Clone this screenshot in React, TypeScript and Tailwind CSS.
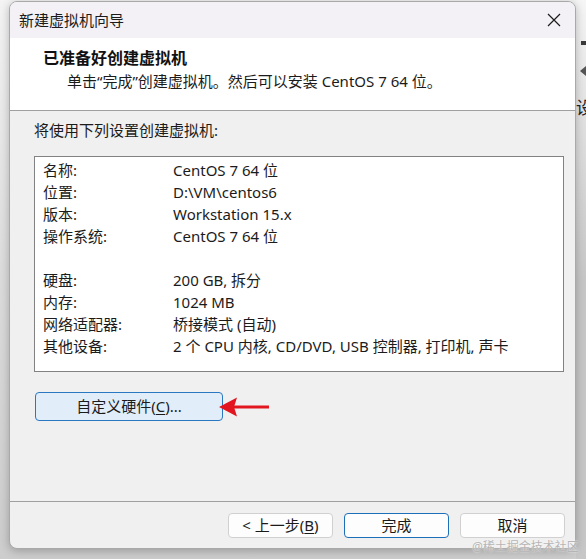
import React from 'react';

const font = { fontFamily: '"Noto Sans", "Noto Sans CJK SC", sans-serif' };

const rows: [string, string][] = [
  ['名称:', 'CentOS 7 64 位'],
  ['位置:', 'D:\\VM\\centos6'],
  ['版本:', 'Workstation 15.x'],
  ['操作系统:', 'CentOS 7 64 位'],
  ['', ''],
  ['硬盘:', '200 GB, 拆分'],
  ['内存:', '1024 MB'],
  ['网络适配器:', '桥接模式 (自动)'],
  ['其他设备:', '2 个 CPU 内核, CD/DVD, USB 控制器, 打印机, 声卡'],
];

function FooterButton({ children, primary }: { children: React.ReactNode; primary?: boolean }) {
  return (
    <button
      className={`w-[105px] h-[25px] rounded-[4px] bg-[#fdfdfd] text-[15px] leading-none text-[#1a1a1a] flex items-center justify-center ${
        primary ? 'border border-[#1e6fba]' : 'border border-[#d0d0d0]'
      }`}
    >
      {children}
    </button>
  );
}

export default function App() {
  return (
    <div
      className="relative w-[586px] h-[559px] overflow-hidden bg-gradient-to-b from-[#f4f4f4] via-[#dcdcdc] to-[#cdcdcd]"
      style={font}
    >
      {/* desktop strip on the right */}
      <div className="absolute right-0 top-0 w-[10px] h-full bg-gradient-to-b from-[#f6f6f6] via-[#c7c7c7] to-[#c7c7c7]" />
      <div className="absolute left-[581px] top-[41px] w-[5px] h-[4px] bg-[#3a3a3a]" />
      <div className="absolute left-[580px] top-[66px] w-0 h-0 border-y-[5px] border-y-transparent border-r-[6px] border-r-[#555]" />
      <div className="absolute left-[576px] top-[99px] text-[17px] leading-none text-[#222]">设</div>

      {/* dialog */}
      <div className="relative ml-[9px] mt-[1px] w-[567px] h-[548px] rounded-[8px] border border-[#a9a9a9] bg-[#f0f0f0] overflow-hidden flex flex-col shadow-[0_2px_10px_rgba(0,0,0,0.25)]">
        {/* title bar */}
        <div className="h-[36px] shrink-0 bg-[#f3f1f6] flex items-center justify-between pl-[9px] pr-[11px]">
          <span className="text-[15px] text-[#1b1b1b] leading-none">新建虚拟机向导</span>
          <svg width="14" height="14" viewBox="0 0 14 14" className="mr-[3px]">
            <path d="M1 1 L13 13 M13 1 L1 13" stroke="#1b1b1b" strokeWidth="1.2" fill="none" />
          </svg>
        </div>

        {/* header */}
        <div className="h-[73px] shrink-0 bg-white border-b border-[#a0a0a0] pl-[33px] pt-[10px]">
          <div className="text-[16px] font-bold text-[#111] leading-[20px]">已准备好创建虚拟机</div>
          <div className="pl-[24px] mt-[3px] text-[15px] text-[#1b1b1b] leading-[20px]">
            单击“完成”创建虚拟机。然后可以安装 CentOS 7 64 位。
          </div>
        </div>

        {/* body */}
        <div className="flex-1 flex flex-col px-[24px] pt-[9px]">
          <div className="text-[15px] text-[#1b1b1b] leading-[20px]">将使用下列设置创建虚拟机:</div>
          <div className="mt-[16px] w-[530px] h-[216px] bg-white border border-[#828282] pt-[2px] pl-[8px]">
            {rows.map(([k, v], i) => (
              <div key={i} className="h-[22px] flex items-center text-[15px] text-[#1b1b1b] leading-none">
                <span className="w-[130px]">{k}</span>
                <span>{v}</span>
              </div>
            ))}
          </div>

          <div className="mt-[20px] flex items-center">
            <button className="ml-[1px] w-[188px] h-[29px] rounded-[4px] border border-[#2a78c2] bg-[#e1eefa] text-[15px] text-[#1b1b1b] leading-none flex items-center justify-center">
              自定义硬件(<span className="underline underline-offset-2">C</span>)...
            </button>
            <svg width="52" height="22" viewBox="0 0 52 22" className="-ml-[4px]">
              <path d="M14 9.5 H50 V12.5 H14 Z" fill="#e2161f" />
              <path d="M0 11 L18 1.5 L15 11 L18 20.5 Z" fill="#e2161f" />
            </svg>
          </div>
        </div>

        {/* footer */}
        <div className="h-[47px] shrink-0 border-t border-[#a0a0a0] flex items-start justify-end gap-[11px] pt-[11px] pr-[10px]">
          <FooterButton>
            &lt; 上一步(<span className="underline underline-offset-2">B</span>)
          </FooterButton>
          <FooterButton primary>完成</FooterButton>
          <FooterButton>取消</FooterButton>
        </div>
      </div>

      {/* watermark */}
      <div className="absolute left-[472px] top-[541px] text-[12px] leading-none text-[#b5b5b5] [text-shadow:0_0_2px_#fff]">
        @稀土掘金技术社区
      </div>
    </div>
  );
}
